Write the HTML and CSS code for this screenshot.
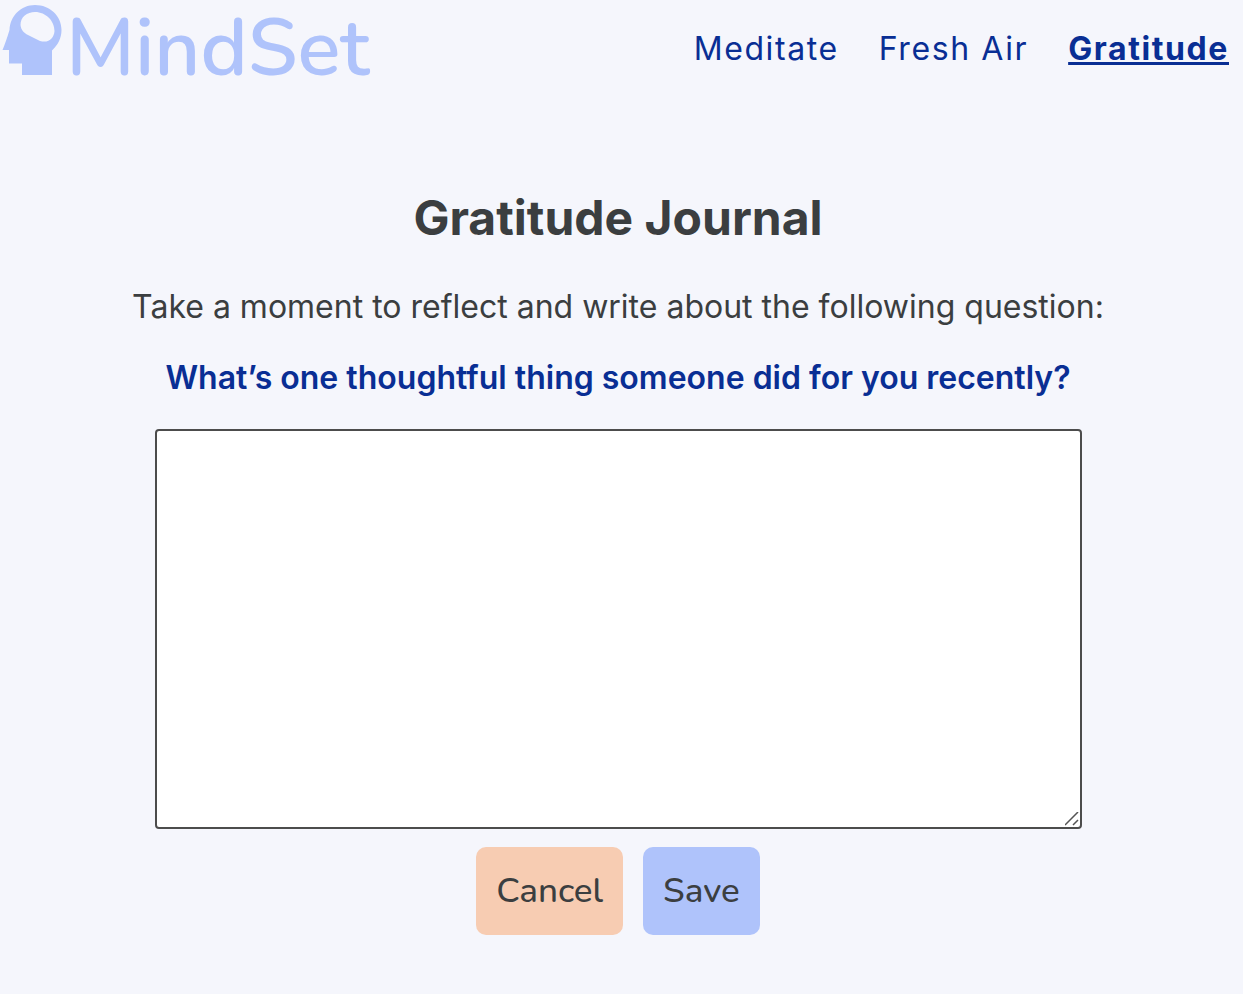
FILE: index.html
```html
<!DOCTYPE html>
<html lang="en">
<head>
  <meta charset="utf-8">
  <meta name="viewport" content="width=device-width, initial-scale=1">
  <title>MindSet</title>
  <link rel="stylesheet" href="styles.css">
</head>
<body>
  <header class="header">
    <a class="logo" href="#">
      <svg class="logo-icon" viewBox="0 0 62 78" aria-hidden="true">
        <path fill="currentColor" fill-rule="evenodd" d="M35 5C50 5 61.500 16 61.500 30C61.500 38 58 45 52 50.500V75H22V63.500H9V50H2.500C5 44 7 38 9.500 30C10 16 21 5 35 5ZM20.500 25C21 30 24 33 28 35L40 41C49 43.500 54 38 54.500 31C54.500 21 46 12 35 12C27 12 20.500 17 20.500 25Z"/>
      </svg>
      <span class="logo-text">MindSet</span>
    </a>
    <nav class="nav">
      <a class="nav-link" href="#">Meditate</a>
      <a class="nav-link" href="#">Fresh Air</a>
      <a class="nav-link nav-link-active" href="#" aria-current="page">Gratitude</a>
    </nav>
  </header>
  <main class="journal">
    <h1 class="title">Gratitude Journal</h1>
    <p class="intro">Take a moment to reflect and write about the following question:</p>
    <form class="form">
      <label class="question" for="entry">What’s one thoughtful thing someone did for you recently?</label>
      <textarea class="entry" id="entry" rows="10"></textarea>
      <div class="actions">
        <button class="button button-cancel" type="button">Cancel</button>
        <button class="button button-save" type="submit">Save</button>
      </div>
    </form>
  </main>
</body>
</html>
```

FILE: styles.css
```css
* {
  box-sizing: border-box;
}

body {
  margin: 0;
  background: #f5f6fc;
  color: #3b3e40;
  font-family: Inter, sans-serif;
  font-size: 32px;
  line-height: 40px;
}

.header {
  display: flex;
  justify-content: space-between;
  align-items: center;
  padding-right: 14px;
}

.logo {
  display: flex;
  color: #afc3fb;
  text-decoration: none;
}

.logo-icon {
  width: 62px;
  height: 78px;
}

.logo-text {
  padding-left: 4px;
  font-family: Nunito, Lato, sans-serif;
  font-size: 80px;
  font-weight: 600;
  line-height: 98px;
}

.nav {
  display: flex;
  gap: 40px;
}

.nav-link {
  color: #092e94;
  letter-spacing: 0.05em;
  text-decoration: none;
}

.nav-link-active {
  font-weight: 700;
  text-decoration: underline;
}

.journal {
  padding: 90px 7px 56px 0;
  text-align: center;
}

.title {
  margin: 0;
  font-size: 48px;
  line-height: 60px;
}

.intro {
  margin: 39px 0 31px;
}

.form {
  display: flex;
  flex-direction: column;
  align-items: center;
}

.question {
  color: #092e94;
  font-weight: 600;
  font-variant-ligatures: none;
}

.entry {
  width: 75%;
  height: 400px;
  margin-top: 31px;
  border: 2px solid #4c4c4c;
  border-radius: 4px;
  background: #fff;
  padding: 4px;
  font: inherit;
}

.entry::-webkit-resizer {
  background: url("data:image/svg+xml,%3Csvg xmlns='http://www.w3.org/2000/svg' width='15' height='15' viewBox='0 0 15 15'%3E%3Cpath d='M0 13L13 0M8 13L13 8' stroke='%23555' stroke-width='1.500'/%3E%3C/svg%3E") no-repeat left top;
}

.actions {
  display: flex;
  gap: 20px;
  margin-top: 18px;
}

.button {
  padding: 20px;
  border: 0;
  border-radius: 10px;
  color: #3b3e40;
  font-family: Nunito, Lato, sans-serif;
  font-size: 35px;
  font-weight: 500;
  line-height: 48px;
}

.button-cancel {
  background: #f7ccb2;
}

.button-save {
  background: #afc3fb;
}
```
